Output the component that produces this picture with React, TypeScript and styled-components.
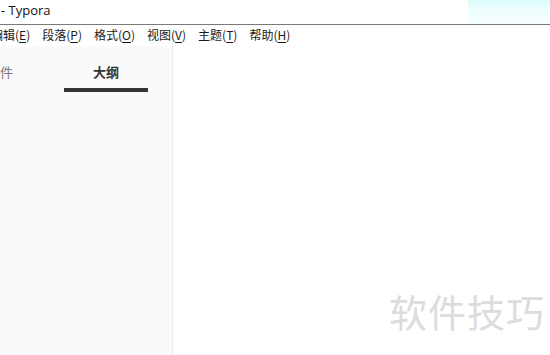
import styled, { createGlobalStyle } from "styled-components";

const GlobalStyle = createGlobalStyle`
  html, body {
    margin: 0;
    padding: 0;
    background: #ffffff;
    overflow: hidden;
  }
  body {
    font-family: "Noto Sans CJK SC", "Noto Sans", sans-serif;
  }
`;

const Window = styled.div`
  width: 550px;
  height: 355px;
  display: flex;
  flex-direction: column;
  position: relative;
  overflow: hidden;
  background: #fff;
`;

/* ── Title bar ── */

const TitleBar = styled.div`
  height: 24px;
  display: flex;
  align-items: center;
  border-bottom: 1px solid #7a7a7a;
  flex-shrink: 0;
`;

const TitleText = styled.div`
  font-family: "Open Sans", "Noto Sans", sans-serif;
  font-size: 13px;
  color: #111;
  padding-left: 1px;
  white-space: nowrap;
  line-height: 1;
  margin-top: -4px;
`;

const Grow = styled.div`
  flex: 1;
`;

const Glow = styled.div`
  width: 82px;
  align-self: stretch;
  background: linear-gradient(180deg, #dcfbfb 0%, #effefe 45%, #f8ffff 100%);
`;

/* ── Menu bar ── */

const MenuBar = styled.div`
  height: 21px;
  display: flex;
  align-items: center;
  margin-left: -15px;
  flex-shrink: 0;
`;

const MenuItem = styled.div`
  padding: 0 6px;
  font-size: 12px;
  color: #1a1a1a;
  white-space: nowrap;
  line-height: 1;
  margin-top: -2px;

  u {
    text-decoration: underline;
    text-underline-offset: 2px;
  }
`;

const menus: [string, string][] = [
  ["编辑", "E"],
  ["段落", "P"],
  ["格式", "O"],
  ["视图", "V"],
  ["主题", "T"],
  ["帮助", "H"],
];

/* ── Body ── */

const Body = styled.div`
  flex: 1;
  display: flex;
  min-height: 0;
`;

const Sidebar = styled.div`
  width: 172px;
  flex-shrink: 0;
  background: #fafafa;
  border-right: 1px solid #ececec;
  display: flex;
  flex-direction: column;
`;

const Tabs = styled.div`
  display: flex;
  gap: 22px;
  margin-left: -42px;
  padding-top: 17px;
`;

const Tab = styled.div<{ $active?: boolean }>`
  width: 84px;
  display: flex;
  flex-direction: column;
  align-items: center;
  gap: 8px;
  font-size: 13px;
  line-height: 17px;
  font-weight: ${(p) => (p.$active ? 700 : 400)};
  color: ${(p) => (p.$active ? "#333" : "#777")};

  &::after {
    content: "";
    width: 100%;
    height: 4px;
    background: ${(p) => (p.$active ? "#363636" : "transparent")};
  }
`;

const Editor = styled.div`
  flex: 1;
  background: #fff;
`;

const Watermark = styled.div`
  position: absolute;
  left: 389px;
  top: 286px;
  font-size: 38px;
  line-height: 1.3;
  letter-spacing: 1px;
  color: #dcdcdc;
  white-space: nowrap;
`;

export default function App() {
  return (
    <>
      <GlobalStyle />
      <Window>
        <TitleBar>
          <TitleText>- Typora</TitleText>
          <Grow />
          <Glow />
        </TitleBar>
        <MenuBar>
          {menus.map(([name, key]) => (
            <MenuItem key={key}>
              {name}(<u>{key}</u>)
            </MenuItem>
          ))}
        </MenuBar>
        <Body>
          <Sidebar>
            <Tabs>
              <Tab>文件</Tab>
              <Tab $active>大纲</Tab>
            </Tabs>
          </Sidebar>
          <Editor />
        </Body>
        <Watermark>软件技巧</Watermark>
      </Window>
    </>
  );
}
